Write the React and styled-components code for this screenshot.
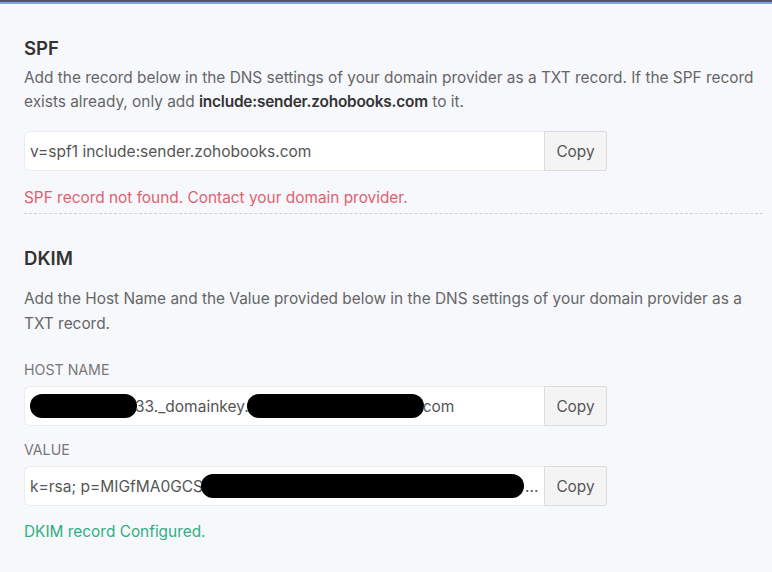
import React from "react";
import styled, { createGlobalStyle } from "styled-components";

const Global = createGlobalStyle`
  html, body { margin: 0; padding: 0; background: #f7f8fc; }
  body { font-family: Inter, "Noto Sans", sans-serif; -webkit-font-smoothing: antialiased; }
`;

const Page = styled.div`
  min-height: 572px;
  background: #f7f8fc;
  border-top: 2px solid #50545c;
  box-sizing: border-box;
`;

const TopAccent = styled.div`
  height: 2px;
  background: #86a3e6;
`;

const Content = styled.div`
  padding: 0 9px 0 24px;
`;

const Section = styled.section`
  padding-top: ${(p) => p.$top}px;
`;

const Title = styled.h2`
  margin: 0;
  font-size: 18.6px;
  line-height: 22px;
  font-weight: 600;
  color: #333;
`;

const Desc = styled.p`
  margin: ${(p) => p.$gap}px 0 0;
  font-size: 15.4px;
  line-height: ${(p) => p.$lh}px;
  color: #666;
  b { color: #333; font-weight: 600; letter-spacing: -0.2px; }
`;

const Label = styled.div`
  margin-top: ${(p) => p.$gap}px;
  font-size: 14.2px;
  line-height: 18px;
  color: #777;
  text-transform: uppercase;
`;

const Field = styled.div`
  margin-top: ${(p) => p.$gap}px;
  display: flex;
  width: 583px;
  height: 40px;
`;

const Value = styled.div`
  flex: 1;
  display: flex;
  align-items: center;
  padding-left: 5px;
  background: #fff;
  border: 1px solid #ececec;
  border-right: none;
  border-radius: 6px 0 0 6px;
  font-size: 15.5px;
  color: #555;
  white-space: nowrap;
  overflow: hidden;
`;

const CopyButton = styled.button`
  width: 63px;
  height: 40px;
  background: #f4f4f4;
  border: 1px solid #dcdcdc;
  border-radius: 0 2px 2px 0;
  font-family: inherit;
  font-size: 15.4px;
  color: #555;
  padding: 0;
  cursor: pointer;
`;

const Redact = styled.span`
  flex: none;
  display: inline-block;
  width: ${(p) => p.$w}px;
  height: 24px;
  background: #000;
  border-radius: 12px;
  margin: 0 ${(p) => p.$mr || 0}px 0 ${(p) => p.$ml || 0}px;
`;

const Status = styled.div`
  margin-top: ${(p) => p.$gap}px;
  font-size: 15.4px;
  line-height: 20px;
  color: ${(p) => (p.$ok ? "#2faf7e" : "#e2606e")};
`;

const Divider = styled.hr`
  margin: 5px 0 0;
  border: none;
  border-top: 1px dashed #cfd1d6;
`;

export default function App() {
  return (
    <>
      <Global />
      <Page>
        <TopAccent />
        <Content>
          <Section $top={33}>
            <Title>SPF</Title>
            <Desc $gap={7} $lh={24}>
              Add the record below in the DNS settings of your domain provider as a TXT record. If the SPF record exists already, only add <b>include:sender.zohobooks.com</b> to it.
            </Desc>
            <Field $gap={17}>
              <Value>v=spf1 include:sender.zohobooks.com</Value>
              <CopyButton>Copy</CopyButton>
            </Field>
            <Status $gap={17}>SPF record not found. Contact your domain provider.</Status>
            <Divider />
          </Section>
          <Section $top={33}>
            <Title>DKIM</Title>
            <Desc $gap={17} $lh={25}>
              Add the Host Name and the Value provided below in the DNS settings of your domain provider as a TXT record.
            </Desc>
            <Label $gap={25}>Host Name</Label>
            <Field $gap={7}>
              <Value>
                <Redact $w={107} $mr={-2} />33._domainkey.<Redact $w={177} $ml={-2} $mr={-1} />com
              </Value>
              <CopyButton>Copy</CopyButton>
            </Field>
            <Label $gap={15}>Value</Label>
            <Field $gap={7}>
              <Value>
                k=rsa; p=MIGfMA0GCS<Redact $w={323} $ml={-2} $mr={1} />...
              </Value>
              <CopyButton>Copy</CopyButton>
            </Field>
            <Status $gap={16} $ok>DKIM record Configured.</Status>
          </Section>
        </Content>
      </Page>
    </>
  );
}
